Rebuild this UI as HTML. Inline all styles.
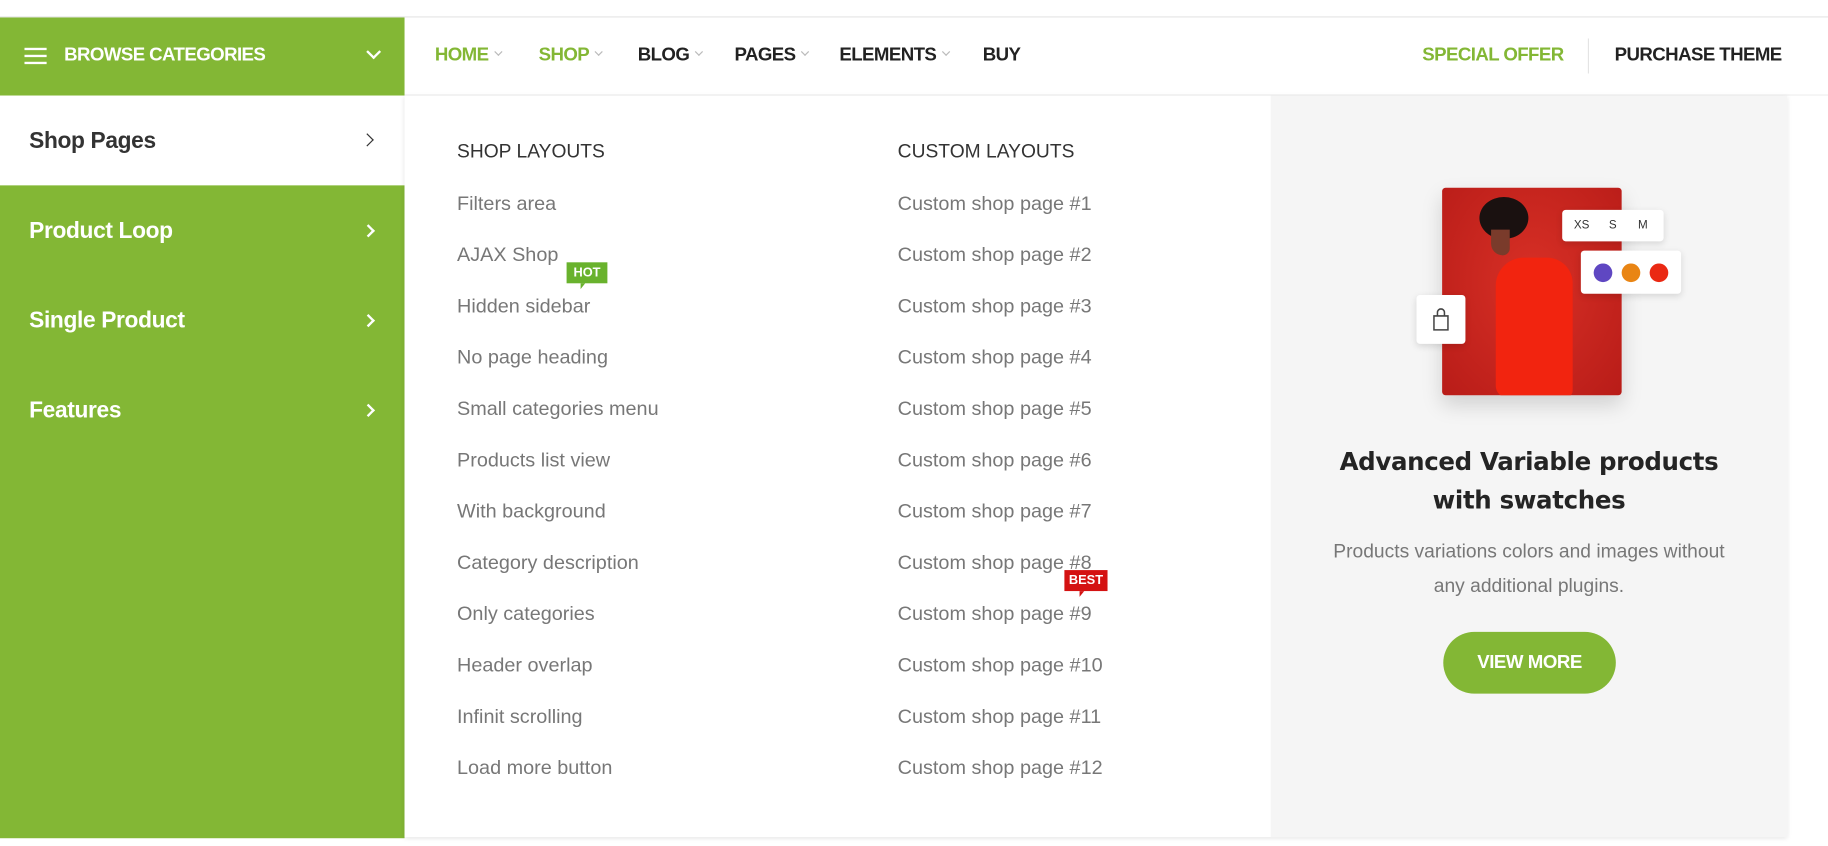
<!DOCTYPE html>
<html><head><meta charset="utf-8"><style>
*{margin:0;padding:0;box-sizing:border-box}
html,body{width:1828px;height:846px;overflow:hidden;background:#fff}
#w{position:absolute;left:0;top:0;width:1568px;height:726px;transform:scale(1.16582);transform-origin:0 0;font-family:"Liberation Sans",sans-serif}
.a{position:absolute;white-space:nowrap}
.nav{top:39px;font-size:16px;font-weight:bold;color:#222;letter-spacing:-0.5px}
.nav.g{color:#83b735}
.chev{display:inline-block;width:5px;height:5px;border-right:1px solid #bbb;border-bottom:1px solid #bbb;transform:rotate(45deg);margin-left:6px;vertical-align:5px}
.side{left:25px;font-size:19.5px;font-weight:bold;color:#fff;letter-spacing:-0.3px}
.sa{left:312px;width:8px;height:8px;border-right:2px solid #fff;border-top:2px solid #fff;transform:rotate(45deg)}
.h{font-size:16.5px;color:#333;top:121px}
.it{font-size:17px;color:#777}
</style></head><body><div id="w">
<div class="a" style="left:0;top:14px;width:1568px;height:1px;background:#e6e6e6"></div>
<div class="a" style="left:347px;top:81px;width:1221px;height:1px;background:#eee"></div>
<div class="a" style="left:0;top:15px;width:347px;height:67px;background:#83b735"></div>
<div class="a" style="left:21px;top:41px;width:19px;height:2px;background:#fff;box-shadow:0 6px 0 #fff,0 12px 0 #fff"></div>
<div class="a" style="left:55px;top:39px;font-size:16px;font-weight:bold;color:#fff;letter-spacing:-0.5px">BROWSE CATEGORIES</div>
<div class="a" style="left:316px;top:40px;width:9px;height:9px;border-right:2px solid #fff;border-bottom:2px solid #fff;transform:rotate(45deg)"></div>
<div class="a nav g" style="left:373px">HOME<span class="chev"></span></div>
<div class="a nav g" style="left:462px">SHOP<span class="chev"></span></div>
<div class="a nav" style="left:547px">BLOG<span class="chev"></span></div>
<div class="a nav" style="left:630px">PAGES<span class="chev"></span></div>
<div class="a nav" style="left:720px">ELEMENTS<span class="chev"></span></div>
<div class="a nav" style="left:843px">BUY</div>
<div class="a nav g" style="left:1220px">SPECIAL OFFER</div>
<div class="a" style="left:1362px;top:33px;width:1px;height:30px;background:#e4e4e4"></div>
<div class="a nav" style="left:1385px">PURCHASE THEME</div>
<div class="a" style="left:0;top:82px;width:347px;height:77px;background:#fff"></div>
<div class="a" style="left:0;top:159px;width:347px;height:560px;background:#83b735"></div>
<div class="a side" style="top:110px;color:#333">Shop Pages</div>
<div class="a" style="left:311px;top:116px;width:8px;height:8px;border-right:1.5px solid #333;border-top:1.5px solid #333;transform:rotate(45deg)"></div>
<div class="a side" style="top:187px">Product Loop</div><div class="a sa" style="top:194px"></div>
<div class="a side" style="top:264px">Single Product</div><div class="a sa" style="top:271px"></div>
<div class="a side" style="top:341px">Features</div><div class="a sa" style="top:348px"></div>
<div class="a" style="left:347px;top:82px;width:1186px;height:636px;background:#fff;box-shadow:0 1px 4px rgba(0,0,0,.12)"></div>
<div class="a" style="left:1090px;top:82px;width:443px;height:636px;background:#f5f5f5"></div>
<div class="a h" style="left:392px">SHOP LAYOUTS</div>
<div class="a h" style="left:770px">CUSTOM LAYOUTS</div>
<div class="a" style="left:392px;top:153px;line-height:44px">
<div class="it">Filters area</div><div class="it">AJAX Shop</div><div class="it">Hidden sidebar</div><div class="it">No page heading</div><div class="it">Small categories menu</div><div class="it">Products list view</div><div class="it">With background</div><div class="it">Category description</div><div class="it">Only categories</div><div class="it">Header overlap</div><div class="it">Infinit scrolling</div><div class="it">Load more button</div></div>
<div class="a" style="left:770px;top:153px;line-height:44px">
<div class="it">Custom shop page #1</div><div class="it">Custom shop page #2</div><div class="it">Custom shop page #3</div><div class="it">Custom shop page #4</div><div class="it">Custom shop page #5</div><div class="it">Custom shop page #6</div><div class="it">Custom shop page #7</div><div class="it">Custom shop page #8</div><div class="it">Custom shop page #9</div><div class="it">Custom shop page #10</div><div class="it">Custom shop page #11</div><div class="it">Custom shop page #12</div></div>
<div class="a" style="left:486px;top:225px;width:35px;height:18px;background:#69b22d;color:#fff;font-size:11px;font-weight:bold;text-align:center;line-height:18px">HOT</div>
<div class="a" style="left:498px;top:243px;border-left:4px solid #69b22d;border-bottom:5px solid transparent"></div>
<div class="a" style="left:913px;top:489px;width:37px;height:18px;background:#d41212;color:#fff;font-size:11px;font-weight:bold;text-align:center;line-height:18px">BEST</div>
<div class="a" style="left:926px;top:507px;border-left:4px solid #d41212;border-bottom:5px solid transparent"></div>
<div class="a" style="left:1237px;top:161px;width:154px;height:178px;border-radius:3px;background:radial-gradient(ellipse at 50% 45%,#d83026,#b81c18);box-shadow:0 8px 18px rgba(0,0,0,.15);overflow:hidden">
<div class="a" style="left:32px;top:8px;width:42px;height:36px;border-radius:50%;background:#1a1110"></div>
<div class="a" style="left:42px;top:36px;width:16px;height:22px;background:#7a3b2b;border-radius:0 0 6px 10px"></div>
<div class="a" style="left:46px;top:60px;width:66px;height:120px;background:#f2240f;border-radius:24px 22px 6px 10px"></div>
</div>
<div class="a" style="left:1340px;top:180px;width:87px;height:27px;background:#fff;border-radius:3px;box-shadow:0 2px 6px rgba(0,0,0,.12);font-size:10px;color:#333;line-height:27px"><span style="position:absolute;left:10px">XS</span><span style="position:absolute;left:40px">S</span><span style="position:absolute;left:65px">M</span></div>
<div class="a" style="left:1356px;top:215px;width:86px;height:37px;background:#fff;border-radius:3px;box-shadow:0 2px 6px rgba(0,0,0,.12)">
<div class="a" style="left:11px;top:11px;width:16px;height:16px;border-radius:50%;background:#5f47c2"></div>
<div class="a" style="left:35px;top:11px;width:16px;height:16px;border-radius:50%;background:#e98514"></div>
<div class="a" style="left:59px;top:11px;width:16px;height:16px;border-radius:50%;background:#ea2913"></div></div>
<div class="a" style="left:1215px;top:253px;width:42px;height:42px;background:#fff;border-radius:3px;box-shadow:0 2px 6px rgba(0,0,0,.12)">
<svg width="42" height="42" viewBox="0 0 42 42" style="position:absolute;left:0;top:0"><path d="M15 18h12v12H15z M18 18v-3a3 3 0 0 1 6 0v3" fill="none" stroke="#444" stroke-width="1.3"/></svg></div>
<div class="a" style="left:1090px;width:443px;top:380px;text-align:center;font-family:'DejaVu Sans',sans-serif;font-weight:bold;font-size:21px;line-height:33px;color:#242424;letter-spacing:-0.3px">Advanced Variable products<br>with swatches</div>
<div class="a" style="left:1090px;width:443px;top:458px;text-align:center;font-size:16.5px;line-height:30px;color:#777">Products variations colors and images without<br>any additional plugins.</div>
<div class="a" style="left:1238px;top:542px;width:148px;height:53px;border-radius:27px;background:#83b735;color:#fff;font-weight:bold;font-size:16px;text-align:center;line-height:53px;letter-spacing:-0.4px">VIEW MORE</div>
</div></body></html>
